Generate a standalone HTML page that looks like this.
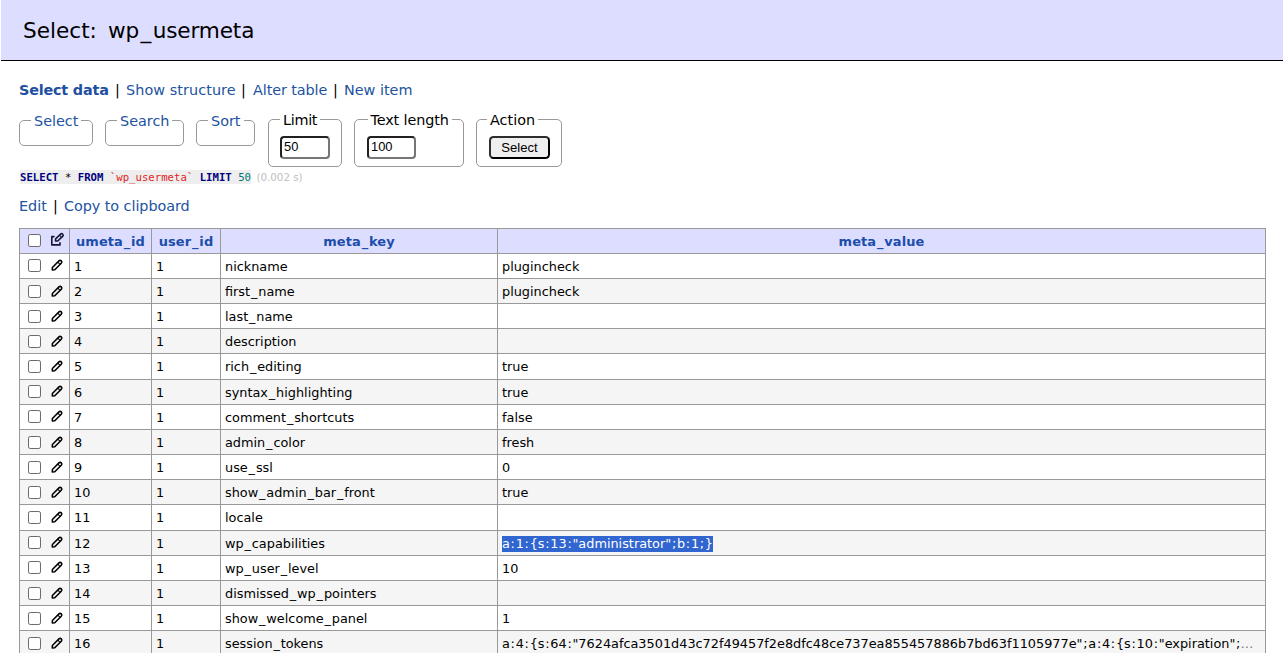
<!DOCTYPE html>
<html lang="en">
<head>
<meta charset="utf-8">
<title>Select: wp_usermeta - Adminer</title>
<style>
html,body{margin:0;padding:0;}
body{width:1283px;height:653px;overflow:hidden;background:#fff;color:#000;font:14.4px/18px "DejaVu Sans","Liberation Sans",sans-serif;position:relative;}
a{color:#22539f;text-decoration:none;}
h2{position:absolute;left:1px;top:0;width:1282px;height:60px;margin:0;background:#ddddff;border-bottom:1px solid #000;box-sizing:content-box;font-weight:normal;font-size:21.6px;}
h2 u{text-decoration:none;padding:0 .068em;}
h2 span{position:absolute;left:22px;top:18px;line-height:26px;white-space:nowrap;}
.links,.edit{position:absolute;left:0;margin:0;white-space:nowrap;line-height:18px;}
.links{top:81px;}
.links>*,.edit>*{position:absolute;top:0;}
.links a.active{font-weight:bold;color:#1f4f9f;letter-spacing:-.2px;}
fieldset{position:absolute;box-sizing:border-box;border:1px solid #999;border-radius:5px;margin:0;padding:0;min-width:0;}
fieldset .lg{position:absolute;top:-9px;background:#fff;padding:0 3px;line-height:18px;white-space:nowrap;}
fieldset .t{position:absolute;white-space:nowrap;overflow:hidden;box-sizing:border-box;border:2px inset #767676;border-radius:4px;font:12.9px/18px "Liberation Sans",sans-serif;padding:0 2px;background:#fff;color:#000;margin:0;outline:0;}
fieldset .btn{position:absolute;box-sizing:border-box;border:2px solid #000;border-color:#2e2e2e #000 #000 #2e2e2e;border-radius:4.5px;font:13.1px "Liberation Sans",sans-serif;background:#efefef;text-align:center;color:#000;}
.sql{position:absolute;left:20px;top:171px;margin:0;white-space:nowrap;font:10.66px/14px "DejaVu Sans Mono","Liberation Mono",monospace;}
.sql code{font:inherit;background:#eee;display:inline-block;height:13px;box-shadow:0 -1px 0 #eee;}
.sql .k{color:#000080;font-weight:bold;}
.sql .s{color:#e01f1f;}
.sql .n{color:#007777;}
.sql .time{color:#c0c0c0;margin-left:-1px;font:10.3px "DejaVu Sans","Liberation Sans",sans-serif;}
.edit{top:197px;}
table{position:absolute;left:19px;top:228px;border-collapse:separate;border-spacing:0;font-size:12.96px;table-layout:fixed;width:1247px;border-top:1px solid #999;border-left:1px solid #999;}
td,th{vertical-align:top;border:0;border-right:1px solid #999;border-bottom:1px solid #999;padding:1px 0 0 4px;height:25px;line-height:23px;box-sizing:border-box;white-space:nowrap;overflow:hidden;text-align:left;font-weight:normal;position:relative;}
tr.h26 td{height:26px;}
tbody td{font-size:12.85px;}
thead td,thead th{background:#ddddff;}
thead th{text-align:center;font-weight:bold;color:#1b4dab;padding-left:0;letter-spacing:.1px;}
th u{text-decoration:none;padding:0 .06em;}
tbody tr:nth-child(2n) td{background:#f5f5f5;}
td u{text-decoration:none;padding:0 .068em;}
td b{font-weight:normal;padding:0 .058em;}
.sel{background:#3165cf;color:#fff;padding-bottom:1px;}
i.e{color:#777;font-style:italic;}
.cb{position:absolute;left:8px;top:5px;width:13px;height:13px;box-sizing:border-box;border:1px solid #6b6b6b;border-radius:2.2px;background:#fff;}
svg.ic{position:absolute;left:30px;top:3px;width:15px;height:15px;overflow:visible;}
tr.d .cb{top:6px;}
tr.d svg.ic{top:4px;}
thead svg.ic{top:4px;}
</style>
</head>
<body>
<h2><span style="left:22px">Select:</span> <span style="left:107px;letter-spacing:-.15px">wp<u>_</u>usermeta</span></h2>
<p class="links"><a class="active" style="left:19px">Select data</a> <span style="left:115px">|</span> <a style="left:126px;letter-spacing:.07px">Show structure</a> <span style="left:241px">|</span> <a style="left:253px;letter-spacing:-.1px">Alter table</a> <span style="left:333px">|</span> <a style="left:344px">New item</a></p>

<fieldset style="left:19px;top:120px;width:74px;height:26px"><span class="lg" style="left:11px"><a>Select</a></span></fieldset>
<fieldset style="left:105px;top:120px;width:79px;height:26px"><span class="lg" style="left:11px"><a>Search</a></span></fieldset>
<fieldset style="left:196px;top:120px;width:59px;height:26px"><span class="lg" style="left:11px"><a>Sort</a></span></fieldset>
<fieldset style="left:268px;top:119px;width:74px;height:48px"><span class="lg" style="left:11px;letter-spacing:-.3px">Limit</span><span class="t" style="left:11px;top:16px;width:50px;height:23px">50</span></fieldset>
<fieldset style="left:354px;top:119px;width:110px;height:48px"><span class="lg" style="left:12.5px;letter-spacing:-.12px">Text length</span><span class="t" style="left:12px;top:16px;width:49px;height:23px">100</span></fieldset>
<fieldset style="left:476px;top:119px;width:86px;height:48px"><span class="lg" style="left:10px">Action</span><div class="btn" style="left:12px;top:16px;width:61px;height:23px;line-height:19px">Select</div></fieldset>

<p class="sql"><code><span class="k">SELECT</span> * <span class="k">FROM</span> <span class="s">`wp_usermeta`</span> <span class="k">LIMIT</span> <span class="n">50</span></code> <span class="time">(0.002 s)</span></p>
<p class="edit"><a style="left:19px">Edit</a> <span style="left:53px">|</span> <a style="left:64px;letter-spacing:-.06px">Copy to clipboard</a></p>

<table>
<colgroup><col style="width:50px"><col style="width:82px"><col style="width:69px"><col style="width:277px"><col style="width:768px"></colgroup>
<thead><tr><td><span class="cb"></span><svg class="ic" viewBox="0 0 15 15"><g fill="none" stroke="#15153a" stroke-width="1.6" stroke-linejoin="round" stroke-linecap="round"><path d="M3.9 3.65H1.8V11.9H10V9.8"/><g transform="translate(5.5,8.0) rotate(-43)"><path d="M0 0L1.6 -1.5H8.4A1.5 1.5 0 0 1 8.4 1.5H1.6Z"/><path d="M6.9 -1.5V1.5" stroke-width="1"/></g></g></svg></td><th>umeta<u>_</u>id</th><th>user<u>_</u>id</th><th>meta<u>_</u>key</th><th>meta<u>_</u>value</th></tr></thead>
<tbody>
<tr><td><span class="cb"></span><svg class="ic" viewBox="0 0 15 15"><g fill="none" stroke="#000" stroke-width="1.55" stroke-linejoin="round" transform="translate(2.3,12.9) rotate(-45)"><path d="M0 0L1.8 -1.65H11.05A1.65 1.65 0 0 1 11.05 1.65H1.8Z"/><path d="M9.4 -1.65V1.65" stroke-width="1.1"/></g></svg></td><td>1</td><td>1</td><td>nickname</td><td>plugincheck</td></tr>
<tr class="d"><td><span class="cb"></span><svg class="ic" viewBox="0 0 15 15"><g fill="none" stroke="#000" stroke-width="1.55" stroke-linejoin="round" transform="translate(2.3,12.9) rotate(-45)"><path d="M0 0L1.8 -1.65H11.05A1.65 1.65 0 0 1 11.05 1.65H1.8Z"/><path d="M9.4 -1.65V1.65" stroke-width="1.1"/></g></svg></td><td>2</td><td>1</td><td>first<u>_</u>name</td><td>plugincheck</td></tr>
<tr class="d"><td><span class="cb"></span><svg class="ic" viewBox="0 0 15 15"><g fill="none" stroke="#000" stroke-width="1.55" stroke-linejoin="round" transform="translate(2.3,12.9) rotate(-45)"><path d="M0 0L1.8 -1.65H11.05A1.65 1.65 0 0 1 11.05 1.65H1.8Z"/><path d="M9.4 -1.65V1.65" stroke-width="1.1"/></g></svg></td><td>3</td><td>1</td><td>last<u>_</u>name</td><td></td></tr>
<tr class="d"><td><span class="cb"></span><svg class="ic" viewBox="0 0 15 15"><g fill="none" stroke="#000" stroke-width="1.55" stroke-linejoin="round" transform="translate(2.3,12.9) rotate(-45)"><path d="M0 0L1.8 -1.65H11.05A1.65 1.65 0 0 1 11.05 1.65H1.8Z"/><path d="M9.4 -1.65V1.65" stroke-width="1.1"/></g></svg></td><td>4</td><td>1</td><td>description</td><td></td></tr>
<tr class="h26 d"><td><span class="cb"></span><svg class="ic" viewBox="0 0 15 15"><g fill="none" stroke="#000" stroke-width="1.55" stroke-linejoin="round" transform="translate(2.3,12.9) rotate(-45)"><path d="M0 0L1.8 -1.65H11.05A1.65 1.65 0 0 1 11.05 1.65H1.8Z"/><path d="M9.4 -1.65V1.65" stroke-width="1.1"/></g></svg></td><td>5</td><td>1</td><td>rich<u>_</u>editing</td><td>true</td></tr>
<tr><td><span class="cb"></span><svg class="ic" viewBox="0 0 15 15"><g fill="none" stroke="#000" stroke-width="1.55" stroke-linejoin="round" transform="translate(2.3,12.9) rotate(-45)"><path d="M0 0L1.8 -1.65H11.05A1.65 1.65 0 0 1 11.05 1.65H1.8Z"/><path d="M9.4 -1.65V1.65" stroke-width="1.1"/></g></svg></td><td>6</td><td>1</td><td>syntax<u>_</u>highlighting</td><td>true</td></tr>
<tr><td><span class="cb"></span><svg class="ic" viewBox="0 0 15 15"><g fill="none" stroke="#000" stroke-width="1.55" stroke-linejoin="round" transform="translate(2.3,12.9) rotate(-45)"><path d="M0 0L1.8 -1.65H11.05A1.65 1.65 0 0 1 11.05 1.65H1.8Z"/><path d="M9.4 -1.65V1.65" stroke-width="1.1"/></g></svg></td><td>7</td><td>1</td><td>comment<u>_</u>shortcuts</td><td>false</td></tr>
<tr class="d"><td><span class="cb"></span><svg class="ic" viewBox="0 0 15 15"><g fill="none" stroke="#000" stroke-width="1.55" stroke-linejoin="round" transform="translate(2.3,12.9) rotate(-45)"><path d="M0 0L1.8 -1.65H11.05A1.65 1.65 0 0 1 11.05 1.65H1.8Z"/><path d="M9.4 -1.65V1.65" stroke-width="1.1"/></g></svg></td><td>8</td><td>1</td><td>admin<u>_</u>color</td><td>fresh</td></tr>
<tr class="d"><td><span class="cb"></span><svg class="ic" viewBox="0 0 15 15"><g fill="none" stroke="#000" stroke-width="1.55" stroke-linejoin="round" transform="translate(2.3,12.9) rotate(-45)"><path d="M0 0L1.8 -1.65H11.05A1.65 1.65 0 0 1 11.05 1.65H1.8Z"/><path d="M9.4 -1.65V1.65" stroke-width="1.1"/></g></svg></td><td>9</td><td>1</td><td>use<u>_</u>ssl</td><td>0</td></tr>
<tr class="d"><td><span class="cb"></span><svg class="ic" viewBox="0 0 15 15"><g fill="none" stroke="#000" stroke-width="1.55" stroke-linejoin="round" transform="translate(2.3,12.9) rotate(-45)"><path d="M0 0L1.8 -1.65H11.05A1.65 1.65 0 0 1 11.05 1.65H1.8Z"/><path d="M9.4 -1.65V1.65" stroke-width="1.1"/></g></svg></td><td>10</td><td>1</td><td>show<u>_</u>admin<u>_</u>bar<u>_</u>front</td><td>true</td></tr>
<tr class="h26 d"><td><span class="cb"></span><svg class="ic" viewBox="0 0 15 15"><g fill="none" stroke="#000" stroke-width="1.55" stroke-linejoin="round" transform="translate(2.3,12.9) rotate(-45)"><path d="M0 0L1.8 -1.65H11.05A1.65 1.65 0 0 1 11.05 1.65H1.8Z"/><path d="M9.4 -1.65V1.65" stroke-width="1.1"/></g></svg></td><td>11</td><td>1</td><td>locale</td><td></td></tr>
<tr><td><span class="cb"></span><svg class="ic" viewBox="0 0 15 15"><g fill="none" stroke="#000" stroke-width="1.55" stroke-linejoin="round" transform="translate(2.3,12.9) rotate(-45)"><path d="M0 0L1.8 -1.65H11.05A1.65 1.65 0 0 1 11.05 1.65H1.8Z"/><path d="M9.4 -1.65V1.65" stroke-width="1.1"/></g></svg></td><td>12</td><td>1</td><td>wp<u>_</u>capabilities</td><td><span class="sel">a<b>:</b>1<b>:</b>{s<b>:</b>13<b>:</b>"administrator"<b>;</b>b<b>:</b>1<b>;</b>}</span></td></tr>
<tr><td><span class="cb"></span><svg class="ic" viewBox="0 0 15 15"><g fill="none" stroke="#000" stroke-width="1.55" stroke-linejoin="round" transform="translate(2.3,12.9) rotate(-45)"><path d="M0 0L1.8 -1.65H11.05A1.65 1.65 0 0 1 11.05 1.65H1.8Z"/><path d="M9.4 -1.65V1.65" stroke-width="1.1"/></g></svg></td><td>13</td><td>1</td><td>wp<u>_</u>user<u>_</u>level</td><td>10</td></tr>
<tr class="d"><td><span class="cb"></span><svg class="ic" viewBox="0 0 15 15"><g fill="none" stroke="#000" stroke-width="1.55" stroke-linejoin="round" transform="translate(2.3,12.9) rotate(-45)"><path d="M0 0L1.8 -1.65H11.05A1.65 1.65 0 0 1 11.05 1.65H1.8Z"/><path d="M9.4 -1.65V1.65" stroke-width="1.1"/></g></svg></td><td>14</td><td>1</td><td>dismissed<u>_</u>wp<u>_</u>pointers</td><td></td></tr>
<tr class="d"><td><span class="cb"></span><svg class="ic" viewBox="0 0 15 15"><g fill="none" stroke="#000" stroke-width="1.55" stroke-linejoin="round" transform="translate(2.3,12.9) rotate(-45)"><path d="M0 0L1.8 -1.65H11.05A1.65 1.65 0 0 1 11.05 1.65H1.8Z"/><path d="M9.4 -1.65V1.65" stroke-width="1.1"/></g></svg></td><td>15</td><td>1</td><td>show<u>_</u>welcome<u>_</u>panel</td><td>1</td></tr>
<tr class="d"><td><span class="cb"></span><svg class="ic" viewBox="0 0 15 15"><g fill="none" stroke="#000" stroke-width="1.55" stroke-linejoin="round" transform="translate(2.3,12.9) rotate(-45)"><path d="M0 0L1.8 -1.65H11.05A1.65 1.65 0 0 1 11.05 1.65H1.8Z"/><path d="M9.4 -1.65V1.65" stroke-width="1.1"/></g></svg></td><td>16</td><td>1</td><td>session<u>_</u>tokens</td><td>a<b>:</b>4<b>:</b>{s<b>:</b>64<b>:</b>"7624afca3501d43c72f49457f2e8dfc48ce737ea855457886b7bd63f1105977e"<b>;</b>a<b>:</b>4<b>:</b>{s<b>:</b>10<b>:</b>"expiration"<b>;</b><i class="e">…</i></td></tr>
</tbody>
</table>
</body>
</html>
